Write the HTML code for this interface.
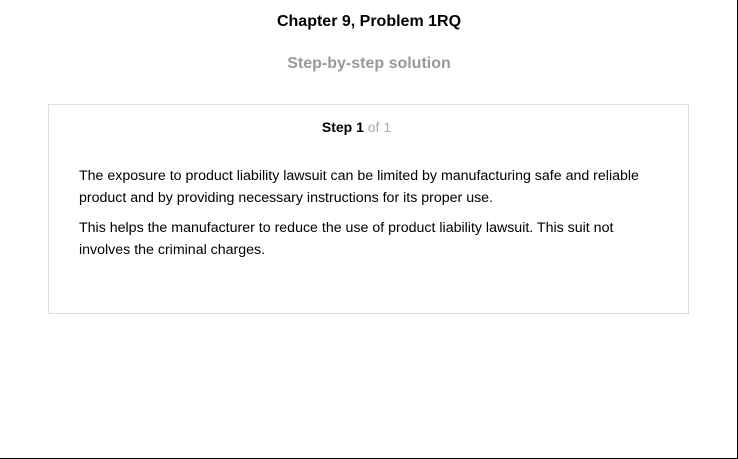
<!DOCTYPE html>
<html><head><style>
body{margin:0;width:738px;height:459px;background:#fff;font-family:"Liberation Sans",Arial,sans-serif;position:relative;overflow:hidden}
.frame{position:absolute;left:0;top:0;border-right:1px solid #000;border-bottom:1px solid #000;box-sizing:border-box;width:738px;height:459px}
.t{position:absolute;top:13px;left:0;width:738px;text-align:center;font-weight:bold;font-size:16px;color:#000}
.s{position:absolute;top:55px;left:0;width:738px;text-align:center;font-weight:bold;font-size:16px;color:#999}
.box{position:absolute;left:48px;top:104px;width:641px;height:210px;box-sizing:border-box;border:1px solid #ddd}
.st{position:absolute;top:14px;left:-12px;width:100%;text-align:center;font-size:14px;color:#000}
.st span{color:#aaa}
.p{position:absolute;left:30px;width:585px;font-size:14.2px;line-height:22px;color:#000}
</style></head><body>
<div class="frame"></div>
<div class="t">Chapter 9, Problem 1RQ</div>
<div class="s">Step-by-step solution</div>
<div class="box">
<div class="st"><b>Step 1</b> <span>of 1</span></div>
<div class="p" style="top:60px">The exposure to product liability lawsuit can be limited by manufacturing safe and reliable product and by providing necessary instructions for its proper use.</div>
<div class="p" style="top:112px">This helps the manufacturer to reduce the use of product liability lawsuit. This suit not involves the criminal charges.</div>
</div>
</body></html>
